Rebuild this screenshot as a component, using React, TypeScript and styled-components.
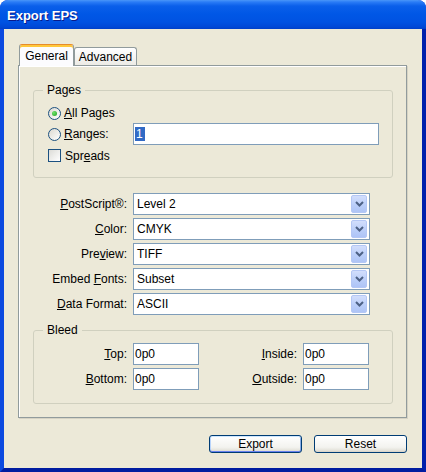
import { Fragment } from 'react'
import type { ReactNode } from 'react'
import styled, { createGlobalStyle, css } from 'styled-components'

const GlobalStyle = createGlobalStyle`
html, body {
  margin: 0;
  padding: 0;
  background: #fff;
}
body {
  font-family: "Liberation Sans", Arial, sans-serif;
  font-size: 12px;
  color: #000;
}
`

const Window = styled.div`
width: 426px;
height: 472px;
display: flex;
flex-direction: column;
border-radius: 8px 8px 0 0;
overflow: hidden;
background: #0831d9;
`

const TitleBar = styled.div`
flex-shrink: 0;
height: 29px;
box-sizing: border-box;
padding: 2px 0 0 7px;
display: flex;
align-items: center;
background: linear-gradient(180deg, #4a96f8 0px, #2a7cf6 2px, #0a5fea 6px, #0057e6 14px, #0052e2 22px, #0048d6 27px, #003fc8 29px);
color: #fff;
font-family: "Liberation Sans", Arial, sans-serif;
font-weight: bold;
font-size: 13px;
text-shadow: 1px 1px 0 #0a1a8a;
`

const Frame = styled.div`
flex: 1;
min-height: 0;
display: flex;
border-left: 4px solid #0b4ae0;
border-right: 4px solid #0020ac;
border-bottom: 4px solid #001ca0;
`

const Body = styled.div`
flex: 1;
display: flex;
flex-direction: column;
background: #ece9d8;
padding: 15px 15px 15px 14px;
`

const TabStrip = styled.div`
display: flex;
align-items: flex-end;
margin-left: 1px;
`

const Tab = styled.div<{ $active?: boolean; $width: number }>`
box-sizing: border-box;
width: ${p => p.$width}px;
height: ${p => (p.$active ? 22 : 18)}px;
display: flex;
align-items: center;
justify-content: center;
border: 1px solid #919b9c;
border-bottom: none;
border-radius: 3px 3px 0 0;
background: linear-gradient(180deg, #ffffff, #ecebe6);
${p => p.$active && css`
  background: #fcfcfe;
  border-top: 1px solid #e68b2c;
  box-shadow: inset 0 2px 0 #ffc83c;
  margin-bottom: -1px;
  position: relative;
  z-index: 1;
  padding-top: 1px;
`}
`

const Panel = styled.div`
display: flex;
flex-direction: column;
border: 1px solid #919b9c;
box-shadow: inset 1px 1px 0 #fff, 1px 1px 0 #d6d3c4;
background: #ece9d8;
padding: 17px 13px 13px 14px;
`

const Group = styled.fieldset<{ $top?: number }>`
margin: ${p => p.$top ?? 0}px 0 0 0;
padding: 0;
border: 1px solid #d0d0bf;
border-radius: 3px;
min-width: 0;
`

const Legend = styled.legend`
margin-left: 9px;
padding: 0 4px;
font-size: 12px;
line-height: 14px;
`

const PagesGrid = styled.div`
display: grid;
grid-template-columns: 79px 246px;
grid-template-rows: 20px 22px 21px;
column-gap: 6px;
padding: 6px 0 11px 14px;
`

const FieldsGrid = styled.div`
margin-top: 15px;
display: grid;
grid-template-columns: 94px 237px;
grid-auto-rows: 22px;
column-gap: 6px;
row-gap: 3px;
`

const BleedGrid = styled.div`
display: grid;
grid-template-columns: 79px 66px 92px 66px;
grid-auto-rows: 22px;
column-gap: 6px;
row-gap: 3px;
padding: 6px 0 13px 14px;
`

const Option = styled.label`
display: flex;
align-items: center;
gap: 3px;
white-space: nowrap;
`

const Radio = styled.span<{ $checked?: boolean }>`
box-sizing: border-box;
width: 13px;
height: 13px;
border-radius: 50%;
border: 1px solid #1c5180;
background: linear-gradient(135deg, #dcd9d0, #ffffff);
display: inline-flex;
align-items: center;
justify-content: center;
${p => p.$checked && css`
  &::after {
    content: '';
    width: 5px;
    height: 5px;
    border-radius: 50%;
    background: radial-gradient(circle at 35% 35%, #6fe36a, #21a121);
  }
`}
`

const Check = styled.span`
box-sizing: border-box;
width: 13px;
height: 13px;
border: 1px solid #1c5180;
background: linear-gradient(135deg, #dcdcd7, #ffffff);
margin-right: 1px;
`

const FieldLabel = styled.span`
display: flex;
align-items: center;
justify-content: flex-end;
white-space: nowrap;
`

const Field = styled.div`
box-sizing: border-box;
height: 22px;
border: 1px solid #7f9db9;
background: #fff;
display: flex;
align-items: center;
padding-left: 1px;
white-space: nowrap;
`

const Selected = styled.span`
background: #316ac5;
color: #fff;
padding: 0 2px 0 1px;
line-height: 14px;
`

const Select = styled.div`
box-sizing: border-box;
height: 22px;
border: 1px solid #7f9db9;
background: #fff;
display: flex;
align-items: center;
padding: 1px 2px 1px 3px;
`

const SelectValue = styled.span`
flex: 1;
`

const DropButton = styled.span`
box-sizing: border-box;
width: 16px;
height: 18px;
border-radius: 2px;
border: 1px solid #b4c7f5;
background: linear-gradient(180deg, #d2defc, #b9cdf9 60%, #aec4f6);
display: flex;
align-items: center;
justify-content: center;
`

const Footer = styled.div`
margin-top: 17px;
display: flex;
justify-content: flex-end;
gap: 12px;
`

const Button = styled.button<{ $default?: boolean }>`
box-sizing: border-box;
width: 93px;
height: 18px;
padding: 0;
border: 1px solid #003c74;
border-radius: 3px;
background: linear-gradient(180deg, #ffffff, #f3f3ef 70%, #e4e2da 90%, #d6d0c5);
font-family: "Liberation Sans", Arial, sans-serif;
font-size: 12px;
color: #000;
${p => p.$default && css`
  box-shadow: inset 0 1px 0 #cee7ff, inset 0 -1px 0 #6982ee, inset 1px 0 0 #b8d4fb, inset -1px 0 0 #89ade4;
`}
`

function Chevron() {
  return (
    <svg width="9" height="6" viewBox="0 0 9 6">
      <polyline points="1,1 4.5,4.5 8,1" fill="none" stroke="#4d6185" strokeWidth="2" />
    </svg>
  )
}

const fields: { label: ReactNode; value: string }[] = [
  { label: <><u>P</u>ostScript®:</>, value: 'Level 2' },
  { label: <><u>C</u>olor:</>, value: 'CMYK' },
  { label: <>Pre<u>v</u>iew:</>, value: 'TIFF' },
  { label: <>Embed <u>F</u>onts:</>, value: 'Subset' },
  { label: <><u>D</u>ata Format:</>, value: 'ASCII' },
]

export default function App() {
  return (
    <>
      <GlobalStyle />
      <Window>
        <TitleBar>Export EPS</TitleBar>
        <Frame>
          <Body>
            <TabStrip>
              <Tab $active $width={55}>General</Tab>
              <Tab $width={63}>Advanced</Tab>
            </TabStrip>
            <Panel>
              <Group>
                <Legend>Pages</Legend>
                <PagesGrid>
                  <Option><Radio $checked /><span><u>A</u>ll Pages</span></Option>
                  <span />
                  <Option><Radio /><span><u>R</u>anges:</span></Option>
                  <Field><Selected>1</Selected></Field>
                  <Option><Check /><span>Spr<u>e</u>ads</span></Option>
                </PagesGrid>
              </Group>

              <FieldsGrid>
                {fields.map((f, i) => (
                  <Fragment key={i}>
                    <FieldLabel><span>{f.label}</span></FieldLabel>
                    <Select>
                      <SelectValue>{f.value}</SelectValue>
                      <DropButton><Chevron /></DropButton>
                    </Select>
                  </Fragment>
                ))}
              </FieldsGrid>

              <Group $top={8}>
                <Legend>Bleed</Legend>
                <BleedGrid>
                  <FieldLabel><span><u>T</u>op:</span></FieldLabel>
                  <Field>0p0</Field>
                  <FieldLabel><span><u>I</u>nside:</span></FieldLabel>
                  <Field>0p0</Field>
                  <FieldLabel><span><u>B</u>ottom:</span></FieldLabel>
                  <Field>0p0</Field>
                  <FieldLabel><span><u>O</u>utside:</span></FieldLabel>
                  <Field>0p0</Field>
                </BleedGrid>
              </Group>
            </Panel>
            <Footer>
              <Button $default>Export</Button>
              <Button>Reset</Button>
            </Footer>
          </Body>
        </Frame>
      </Window>
    </>
  )
}
